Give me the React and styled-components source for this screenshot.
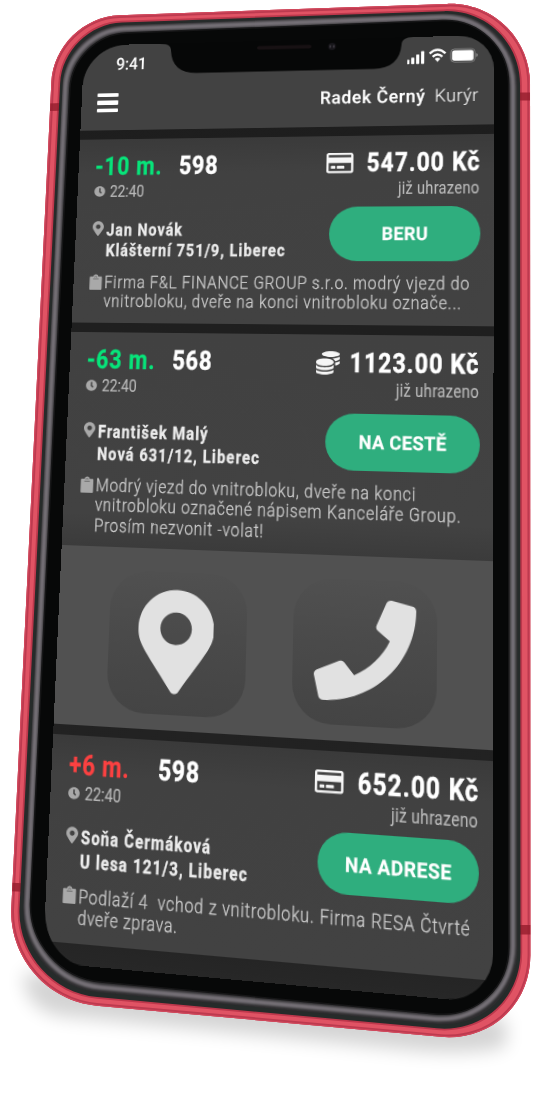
import React, { useLayoutEffect, useState } from 'react';
import styled, { createGlobalStyle } from 'styled-components';
import { FaMapMarkerAlt, FaClock, FaCoins, FaRegCreditCard, FaPhone } from 'react-icons/fa';

const SCREEN_W = 430;
const SCREEN_H = 940;

// Projects the flat screen onto the tilted face of the phone.
function project(w, h, [p0, p1, p2, p3]) {
  const dx1 = p1[0] - p2[0];
  const dx2 = p3[0] - p2[0];
  const sx = p0[0] - p1[0] + p2[0] - p3[0];
  const dy1 = p1[1] - p2[1];
  const dy2 = p3[1] - p2[1];
  const sy = p0[1] - p1[1] + p2[1] - p3[1];
  const det = dx1 * dy2 - dx2 * dy1;
  const g = (sx * dy2 - dx2 * sy) / det;
  const k = (dx1 * sy - sx * dy1) / det;
  const a = p1[0] - p0[0] + g * p1[0];
  const b = p3[0] - p0[0] + k * p3[0];
  const d = p1[1] - p0[1] + g * p1[1];
  const e = p3[1] - p0[1] + k * p3[1];
  const m = [a / w, d / w, 0, g / w, b / h, e / h, 0, k / h, 0, 0, 1, 0, p0[0], p0[1], 0, 1];
  return `matrix3d(${m.map((n) => n.toFixed(9)).join(',')})`;
}

const SCREEN_MATRIX = project(SCREEN_W, SCREEN_H, [
  [84.3, 45.7],
  [493.8, 34.9],
  [493, 1003.5],
  [42.8, 962.3],
]);

// Closed outline through four corners, each rounded by its own radius.
function roundedQuad(points, radii) {
  const toward = (p, q, r) => {
    const l = Math.hypot(q[0] - p[0], q[1] - p[1]);
    return [p[0] + ((q[0] - p[0]) * r) / l, p[1] + ((q[1] - p[1]) * r) / l];
  };
  const mix = (p, q, t) => [p[0] + (q[0] - p[0]) * t, p[1] + (q[1] - p[1]) * t];
  const f = (p) => `${p[0].toFixed(2)} ${p[1].toFixed(2)}`;
  let d = '';
  points.forEach((p, i) => {
    const s = toward(p, points[(i + 3) % 4], radii[i]);
    const e = toward(p, points[(i + 1) % 4], radii[i]);
    d += `${i ? 'L' : 'M'}${f(s)}C${f(mix(s, p, 0.5523))} ${f(mix(e, p, 0.5523))} ${f(e)}`;
  });
  return `${d}Z`;
}

const SHELL = roundedQuad([[54.5, 17.5], [530, 1], [530.4, 1045], [7, 997.5]], [65, 83, 90, 90]);
const SEAM = roundedQuad([[63, 24.5], [520, 8.5], [520.5, 1036], [15.5, 989.5]], [59, 76, 84, 82]);
const RIM = roundedQuad([[65.3, 27], [517.5, 11], [517.5, 1031.5], [19.5, 985]], [58, 74, 82, 80]);
const RIM_MID = roundedQuad([[68, 31], [513, 14.5], [513, 1026], [23.5, 980]], [57, 72, 80, 78]);
const GLASS = roundedQuad([[72.5, 35], [508.6, 18], [508.8, 1021], [27, 975]], [54, 66, 74, 74]);

const GlobalStyle = createGlobalStyle`
  html, body { margin: 0; background: #fff; }
  body { overflow: hidden; font-family: Roboto, "Liberation Sans", sans-serif; }
  * { box-sizing: border-box; }
`;

const Stage = styled.main`
  position: relative;
  width: 533px;
  height: 1098px;
  overflow: hidden;
  background: #fff;
`;

const Body = styled.svg`
  position: absolute;
  inset: 0;
`;

const Screen = styled.section`
  position: absolute;
  left: 0;
  top: 0;
  width: ${SCREEN_W}px;
  height: ${SCREEN_H}px;
  transform-origin: 0 0;
  transform: ${SCREEN_MATRIX};
  display: flex;
  flex-direction: column;
  gap: 10px;
  background: linear-gradient(#1d1d1d 0, #232323 900px, #272727);
  border-radius: 47px 36px 43px 43px / 47px 36px 44px 50px;
  overflow: hidden;
`;

const Header = styled.header`
  height: 95px;
  flex: none;
  padding: 9.5px 15.5px 0 16.5px;
  background: #424242;
`;

const StatusBar = styled.div`
  display: flex;
  justify-content: space-between;
  height: 42px;
  padding: 2px 0 0 19.5px;
`;

const Notch = styled.svg`
  position: absolute;
  left: 83px;
  top: -1px;
`;

const StatusIcons = styled.svg`
  margin-top: 0.5px;
`;

const NavBar = styled.div`
  display: flex;
  align-items: center;
  justify-content: space-between;
  height: 26px;
`;

const Burger = styled.button`
  display: flex;
  flex-direction: column;
  justify-content: space-between;
  width: 23.5px;
  height: 20.5px;
  padding: 0;
  border: 0;
  background: none;
`;

const Bar = styled.span`
  height: 4.2px;
  border-radius: 1px;
  background: #fff;
`;

const User = styled.div`
  display: flex;
  gap: 9px;
  margin-top: -1px;
`;

const Card = styled.article`
  height: ${(p) => p.$height}px;
  flex: none;
  padding: 14.5px 13.5px 0 18px;
  background: ${(p) =>
    p.$open
      ? 'linear-gradient(#414141 0, #424242 85%, #3b3b3b)'
      : 'linear-gradient(#3a3a3a 0, #414141 38px, #424242)'};
`;

const Columns = styled.div`
  display: flex;
  justify-content: space-between;
`;

const Column = styled.div`
  display: flex;
  flex-direction: column;
  align-items: ${(p) => (p.$end ? 'flex-end' : 'flex-start')};
  margin-top: ${(p) => (p.$end ? -0.5 : 0)}px;
`;

const TitleRow = styled.div`
  display: flex;
  align-items: center;
  height: 30px;
  gap: ${(p) => p.$gap || 0}px;
`;

const DelayCell = styled.div`
  width: 90.4px;
`;

const MetaRow = styled.div`
  display: flex;
  align-items: center;
  gap: 5.5px;
  height: 20px;
  margin-top: 2px;
`;

const Address = styled.div`
  display: flex;
  margin-top: ${(p) => p.$space}px;
`;

const Note = styled.div`
  display: flex;
  margin-top: ${(p) => p.$space}px;
  margin-left: -0.8px;
`;

const Lines = styled.div`
  display: flex;
  flex-direction: column;
`;

const IconCell = styled.div`
  width: ${(p) => p.$w}px;
  flex: none;
  padding-top: ${(p) => p.$top || 0}px;
  color: #a9a9a9;
  line-height: 0;
`;

const PayIcon = styled.span`
  color: #f6f6f6;
  line-height: 0;
`;

const Action = styled.button`
  display: flex;
  align-items: center;
  justify-content: center;
  width: 150.5px;
  height: 57px;
  margin-top: ${(p) => p.$space}px;
  padding: 2.5px 0 0 2px;
  border: 0;
  border-radius: 28.5px;
  background: #2fae7e;
`;

const Slot = styled.span`
  display: block;
  width: ${(p) => p.$w}px;
  height: ${(p) => p.$line}px;
  white-space: pre;
`;

const Glyphs = styled.span`
  display: inline-block;
  transform-origin: 0 50%;
  transform: scaleX(${(p) => p.$squeeze});
  font-family: Roboto, "Liberation Sans", sans-serif;
  font-size: ${(p) => p.$size}px;
  line-height: ${(p) => p.$line}px;
  font-weight: ${(p) => p.$weight};
  color: ${(p) => p.$color};
  -webkit-text-stroke: ${(p) => p.$ink}px ${(p) => p.$color};
`;

// Condensed text tracked out to the given width.
function Condensed({ w, size, line, weight = 400, color = '#fff', squeeze = 0.83, ink = 0, children }) {
  const [tracking, setTracking] = useState(0);
  useLayoutEffect(() => {
    const pen = document.createElement('canvas').getContext('2d');
    pen.font = `${weight} ${size}px Roboto`;
    const natural = pen.measureText(children).width;
    setTracking((w / squeeze - natural) / children.length);
  }, [w, size, weight, squeeze, children]);
  return (
    <Slot $w={w} $line={line}>
      <Glyphs
        $size={size}
        $line={line}
        $weight={weight}
        $color={color}
        $squeeze={squeeze}
        $ink={ink}
        style={{ letterSpacing: `${tracking}px` }}
      >
        {children}
      </Glyphs>
    </Slot>
  );
}

const Clipboard = () => (
  <svg width="13.5" height="17.5" viewBox="0 0 14 17.5">
    <path
      fill="currentColor"
      d="M1.6 2.4H4.3C4.6 1 5.6.2 7 .2S9.4 1 9.7 2.4h2.7c.9 0 1.4.6 1.4 1.4v12.1c0 .9-.5 1.4-1.4 1.4H1.6c-.9 0-1.4-.5-1.4-1.4V3.8c0-.8.5-1.4 1.4-1.4z"
    />
    <path fill="none" stroke="#6b6b6b" strokeWidth=".9" d="M4 5.1h6M5.6 3.2Q7 1.6 8.4 3.2" />
  </svg>
);

const Quick = styled.section`
  display: flex;
  justify-content: center;
  gap: 45.5px;
  flex: none;
  height: 178.3px;
  margin-top: -10px;
  padding-top: 23px;
  background: #515151;
`;

const QuickButton = styled.button`
  display: flex;
  justify-content: center;
  width: 139.5px;
  height: 140px;
  padding: ${(p) => p.$top}px ${(p) => p.$nudge}px 0 0;
  border: 0;
  border-radius: 38px;
  background: linear-gradient(#505050, #4a4a4a 45%, #444);
  color: #e1e1e1;
`;

function Order({ height, open, delay, number, price, address, note, action }) {
  return (
    <Card $height={height} $open={open}>
      <Columns>
        <Column>
          <TitleRow>
            <DelayCell>
              <Condensed w={delay.w} size={27.5} line={30} weight={700} ink={0.3} color={delay.color}>
                {delay.text}
              </Condensed>
            </DelayCell>
            <Condensed w={41.5} size={27.5} line={30} weight={700} ink={0.5}>
              {number}
            </Condensed>
          </TitleRow>
          <MetaRow>
            <IconCell $w={11.6}>
              <FaClock size={12} />
            </IconCell>
            <Condensed w={36.8} size={17.8} line={20} ink={0.15} color="#b8b8b8">
              22:40
            </Condensed>
          </MetaRow>
          <Address $space={address.space}>
            <IconCell $w={15.2} $top={0.5}>
              <FaMapMarkerAlt size={16.4} style={{ width: 12 }} />
            </IconCell>
            <Lines>
              {address.lines.map(([text, w]) => (
                <Condensed key={text} w={w} size={18.3} line={address.line} weight={700} ink={0.3} color="#ececec">
                  {text}
                </Condensed>
              ))}
            </Lines>
          </Address>
        </Column>
        <Column $end>
          <TitleRow $gap={price.gap}>
            <PayIcon>{price.icon}</PayIcon>
            <Condensed w={price.w} size={27.5} line={30} weight={700} ink={0.5}>
              {price.text}
            </Condensed>
          </TitleRow>
          <MetaRow>
            <Condensed w={81.2} size={17.6} line={20} ink={0.1} color="#b9b9b9">
              již uhrazeno
            </Condensed>
          </MetaRow>
          <Action $space={action.space}>
            <Condensed w={action.w} size={19} line={22} weight={700} ink={0.25} squeeze={0.95}>
              {action.text}
            </Condensed>
          </Action>
        </Column>
      </Columns>
      <Note $space={note.space}>
        <IconCell $w={15.6} $top={0.5}>
          <Clipboard />
        </IconCell>
        <Lines>
          {note.lines.map(([text, w]) => (
            <Condensed key={text} w={w} size={19} line={20.2} weight={300} ink={0.3} color="#cbcbcb">
              {text}
            </Condensed>
          ))}
        </Lines>
      </Note>
    </Card>
  );
}

const card = <FaRegCreditCard size={27.5} style={{ height: 27.5 }} />;
const coins = <FaCoins size={24} />;

function PhoneBody() {
  return (
    <Body width="533" height="1098" viewBox="0 0 533 1098">
      <defs>
        <clipPath id="shell"><path d={SHELL} /></clipPath>
        <clipPath id="rim"><path d={RIM} /></clipPath>
        <filter id="ground" x="-20%" y="-60%" width="140%" height="220%"><feGaussianBlur stdDeviation="9" /></filter>
        <filter id="soft"><feGaussianBlur stdDeviation="1.3" /></filter>
      </defs>
      <path d="M24 972L506 1019V1046Q480 1055 420 1051L60 1016Q22 1008 24 972Z" fill="#000" opacity=".17" filter="url(#ground)" />
      <path d={SHELL} fill="#e05364" />
      <g clipPath="url(#shell)" fill="none">
        <path d={SHELL} stroke="#bd3a4f" strokeWidth="5.5" />
        <path d={SHELL} stroke="#d34a5e" strokeWidth="2" />
        <path d={SEAM} stroke="#bd384c" strokeWidth="3.5" />
        <path d="M48 103.5l14-.4v7.6l-14 .4zM516 92.5h16v8h-16zM8 882.5l15 .7v8.6l-15-.7zM517 925h15v9.5h-15z" fill="#98202f" opacity=".85" />
      </g>
      <path d={SEAM} fill="#262b2a" />
      <path d={RIM} fill="#2e2d2f" />
      <g clipPath="url(#rim)">
        <path d={RIM_MID} fill="none" stroke="#747076" strokeWidth="4.8" filter="url(#soft)" />
      </g>
      <path d={GLASS} fill="#070808" stroke="#161617" strokeWidth="1.5" />
    </Body>
  );
}

export default function App() {
  return (
    <Stage>
      <GlobalStyle />
      <PhoneBody />
      <Screen>
        <Header>
          <StatusBar>
            <Condensed w={33.2} size={18.5} line={20} weight={500} ink={0.1} squeeze={0.92}>
              9:41
            </Condensed>
            <StatusIcons width="72" height="18" viewBox="0 0 72 18" fill="#fff">
              <rect x="-1" y="12.6" width="3.2" height="4.6" rx=".7" />
              <rect x="4" y="10.2" width="3.2" height="7" rx=".7" />
              <rect x="9" y="7" width="3.2" height="10.2" rx=".7" />
              <rect x="14" y="3.6" width="3.2" height="13.6" rx=".7" />
              <g fill="none" stroke="#fff" strokeWidth="2.5">
                <path d="M22.6 6.4Q30.600-1.400 38.6 6.4" />
                <path d="M25.7 9.9Q30.6 5.2 35.5 9.9" />
              </g>
              <path d="M27.7 12.1Q30.6 9.8 33.5 12.1L30.6 15.4Z" />
              <rect x="43.8" y="2" width="24.4" height="14.2" rx="3.8" fill="none" stroke="#8d8d8d" strokeWidth=".8" />
              <rect x="45.2" y="3.4" width="21.6" height="11.4" rx="2.4" />
              <path d="M69.4 7q1.6.5 1.6 2.1t-1.6 2.1z" fill="#8d8d8d" />
            </StatusIcons>
          </StatusBar>
          <NavBar>
            <Burger aria-label="Menu">
              <Bar />
              <Bar />
              <Bar />
            </Burger>
            <User>
              <Condensed w={107.8} size={18.8} line={22} weight={500} ink={0.3} squeeze={0.95}>
                Radek Černý
              </Condensed>
              <Condensed w={44} size={18.8} line={22} weight={300} ink={0.2} color="#f4f4f4" squeeze={0.95}>
                Kurýr
              </Condensed>
            </User>
          </NavBar>
          <Notch width="266" height="36" viewBox="0 0 266 36">
            <path d="M0 0H266V1Q254 1 254 9Q252 34.4 226 34.4H40Q14 34.4 12 9Q12 1 0 1Z" fill="#060707" />
            <rect x="104" y="6.5" width="57" height="4" rx="2" fill="#171113" />
            <circle cx="182.5" cy="9" r="4" fill="#17161a" />
            <path d="M180.7 7.6v2.8M184.3 7.6v2.8" stroke="#55505a" strokeWidth="1" />
          </Notch>
        </Header>
        <Order
          height={197.5}
          delay={{ text: '-10 m.', w: 72.5, color: '#07e47a' }}
          number="598"
          price={{ text: '547.00 Kč', w: 114, icon: card, gap: 13 }}
          address={{ space: 21.5, line: 22, lines: [['Jan Novák', 81.5], ['Klášterní 751/9, Liberec', 189]] }}
          action={{ text: 'BERU', w: 46.5, space: 8.5 }}
          note={{
            space: 13,
            lines: [
              ['Firma F&L FINANCE GROUP s.r.o. modrý vjezd do', 374],
              ['vnitrobloku, dveře na konci vnitrobloku označe...', 366],
            ],
          }}
        />
        <Order
          height={221}
          open
          delay={{ text: '-63 m.', w: 72.5, color: '#07e47a' }}
          number="568"
          price={{ text: '1123.00 Kč', w: 127.5, icon: coins, gap: 10.5 }}
          address={{ space: 27, line: 22.6, lines: [['František Malý', 115], ['Nová 631/12, Liberec', 168]] }}
          action={{ text: 'NA CESTĚ', w: 86, space: 14.2 }}
          note={{
            space: 11,
            lines: [
              ['Modrý vjezd do vnitrobloku, dveře na konci', 323],
              ['vnitrobloku označené nápisem Kanceláře Group.', 366.5],
              ['Prosím nezvonit -volat!', 173.5],
            ],
          }}
        />
        <Quick>
          <QuickButton $top={16} $nudge={3.5} aria-label="Mapa">
            <FaMapMarkerAlt size={105} style={{ width: 76.5 }} />
          </QuickButton>
          <QuickButton $top={19.5} $nudge={0} aria-label="Zavolat">
            <FaPhone size={98} />
          </QuickButton>
        </Quick>
        <Order
          height={198}
          delay={{ text: '+6 m.', w: 61.5, color: '#fb4141' }}
          number="598"
          price={{ text: '652.00 Kč', w: 114, icon: card, gap: 13 }}
          address={{ space: 21, line: 22.3, lines: [['Soňa Čermáková', 130], ['U lesa 121/3, Liberec', 166.5]] }}
          action={{ text: 'NA ADRESE', w: 100, space: 9 }}
          note={{
            space: 11.8,
            lines: [
              ['Podlaží 4  vchod z vnitrobloku. Firma RESA Čtvrté', 376.5],
              ['dveře zprava.', 99.5],
            ],
          }}
        />
      </Screen>
    </Stage>
  );
}
